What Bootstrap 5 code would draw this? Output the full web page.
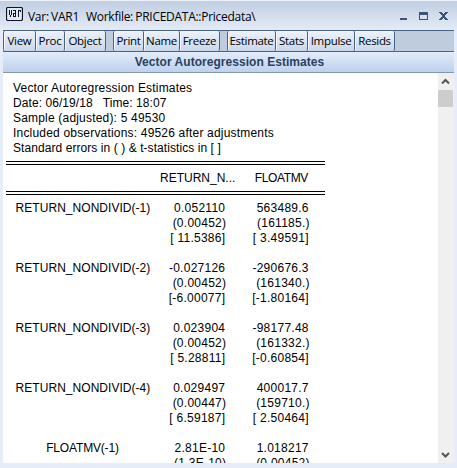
<!DOCTYPE html>
<html lang="en">
<head>
<meta charset="utf-8">
<title>Var: VAR1</title>
<link href="https://cdn.jsdelivr.net/npm/bootstrap@5.3.0/dist/css/bootstrap.min.css" rel="stylesheet">
<style>
body{width:457px;height:468px;background:#e6ecf8;font-family:"Liberation Sans",Arial,sans-serif;color:#000}
.win{height:468px;border-top:1px solid #eef2fa;background:#e6ecf8}
.titlebar{height:29px;padding:0 8px 0 6px;background:linear-gradient(#c0cee2,#e4ebf6);white-space:pre}
.app-icon{margin-bottom:3px}
.caption-text{font:12px/29px "Open Sans","Noto Sans",sans-serif;margin-left:5px;letter-spacing:-.28px;word-spacing:-.5px;padding-top:1px}
.inner{margin:0 3px;height:433px}
.tools{height:22px;background:#bfccde;border-top:1px solid #48628a;border-bottom:1px solid #48628a}
.tools .btn{--bs-btn-padding-x:0;--bs-btn-padding-y:0;border:0;border-right:1px solid #48628a;border-radius:2px;height:20px;background:linear-gradient(#edf2fa,#c9d7ea);color:#000;font:11.5px/20px "Open Sans","Noto Sans",sans-serif;letter-spacing:-.32px;white-space:nowrap;box-shadow:inset 1px 1px #f4f7fc}
.tools .first{border-left:1px solid #48628a}
.w29{width:29px}.w31{width:31px}.w32{width:32px}.w33{width:33px}.w36{width:36px}.w40{width:40px}.w41{width:41px}.w47{width:47px}.w49{width:49px}
.gap8{margin-right:7px}
.heading{height:21px;padding-left:2px;background:linear-gradient(#e3ecf8,#bbd2ee);border-bottom:1px solid #8596b3;color:#2b405f;font-size:12px;font-weight:700;line-height:20px;letter-spacing:.04px}
.sheet{height:390px;font-size:12px;line-height:15px;white-space:pre}
.content-pane{padding:8px 0 0 3px}
.intro{padding-left:7px;height:80px;letter-spacing:.19px}
.intro .tight{letter-spacing:.07px}
.rule{width:319px;height:4px;border-top:1px solid #000;border-bottom:1px solid #000}
.g{display:grid;grid-template-columns:154px 67px 83.5px;width:319px}
.heads{height:26px;padding-top:6px}
.rows{padding-top:6px}
.entry{height:60px}
.n{text-align:right;padding-right:1.75px;letter-spacing:.25px}
.heads .n{letter-spacing:-.35px;padding-right:2.5px}
.n .p{margin-right:-1px}
.lab{text-align:center;letter-spacing:.04px}
.lab-short{letter-spacing:-.17px;padding-right:1px}
.sb{width:16px;background:#f0f0f0}
.thumb{height:17px;width:15px;background:#cdcdcd}
</style>
<script src="https://cdn.jsdelivr.net/npm/bootstrap@5.3.0/dist/js/bootstrap.bundle.min.js"></script>
</head>
<body class="overflow-hidden">
<div class="win">
<header class="titlebar d-flex align-items-center">
<svg class="app-icon" width="17" height="14" viewBox="0 0 17 14" fill="none" stroke="#0c1626"><rect x=".5" y=".5" width="16" height="13" rx="1.5" fill="#dfe7f3" stroke-width="1.2"/><path d="M3.500 3v5M4.500 8v2M5.500 3v5M7 3.500h3M9.500 3v7M7 9.500h3M7.500 6v4M7 6.500h3M12.500 3v7M12 3.500h3M14.500 3v2" shape-rendering="crispEdges"/></svg>
<span class="caption-text">Var: VAR1   Workfile: PRICEDATA::Pricedata\</span>
<svg class="ms-auto" width="49" height="10" viewBox="0 0 49 10" fill="#3c5378" shape-rendering="crispEdges"><path d="M0 7h7v2H0zM19 1h9v8h-9zM39 1h3v1h-3zM45 1h3v1h-3zM40 2h3v1h-3zM44 2h3v1h-3zM41 3h5v1h-5zM42 4h3v2h-3zM41 6h5v1h-5zM40 7h3v1h-3zM44 7h3v1h-3zM39 8h3v1h-3zM45 8h3v1h-3z"/><path d="M20 4h7v4h-7z" fill="#d6e0ee"/></svg>
</header>
<div class="inner">
<nav class="tools d-flex">
<button class="btn first w33">View</button><button class="btn w29">Proc</button><button class="btn w41 gap8">Object</button>
<button class="btn first w31">Print</button><button class="btn w36">Name</button><button class="btn w40 gap8">Freeze</button>
<button class="btn first w49">Estimate</button><button class="btn w32">Stats</button><button class="btn w47">Impulse</button><button class="btn w40">Resids</button>
</nav>
<div class="heading text-center">Vector Autoregression Estimates</div>
<div class="sheet d-flex bg-white overflow-hidden"><main class="content-pane flex-grow-1"><div class="intro"><div>Vector Autoregression Estimates</div><div class="tight">Date: 06/19/18   Time: 18:07</div><div>Sample (adjusted): 5 49530</div><div>Included observations: 49526 after adjustments</div><div class="tight">Standard errors in ( ) &amp; t-statistics in [ ]</div></div><div class="rule"></div><div class="g heads"><div></div><div>RETURN_N...</div><div class="n">FLOATMV</div></div><div class="rule"></div><div class="rows"><div class="g entry"><div class="lab">RETURN_NONDIVID(-1)</div><div class="n"><div>0.052110</div><div class="p">(0.00452)</div><div>[ 11.5386]</div></div><div class="n"><div>563489.6</div><div class="p">(161185.)</div><div>[ 3.49591]</div></div></div><div class="g entry"><div class="lab">RETURN_NONDIVID(-2)</div><div class="n"><div>-0.027126</div><div class="p">(0.00452)</div><div>[-6.00077]</div></div><div class="n"><div>-290676.3</div><div class="p">(161340.)</div><div>[-1.80164]</div></div></div><div class="g entry"><div class="lab">RETURN_NONDIVID(-3)</div><div class="n"><div>0.023904</div><div class="p">(0.00452)</div><div>[ 5.28811]</div></div><div class="n"><div>-98177.48</div><div class="p">(161332.)</div><div>[-0.60854]</div></div></div><div class="g entry"><div class="lab">RETURN_NONDIVID(-4)</div><div class="n"><div>0.029497</div><div class="p">(0.00447)</div><div>[ 6.59187]</div></div><div class="n"><div>400017.7</div><div class="p">(159710.)</div><div>[ 2.50464]</div></div></div><div class="g entry"><div class="lab lab-short">FLOATMV(-1)</div><div class="n"><div>2.81E-10</div><div class="p">(1.3E-10)</div></div><div class="n"><div>1.018217</div><div class="p">(0.00452)</div></div></div></div></main><aside class="sb d-flex flex-column"><svg width="15" height="17" viewBox="0 0 15 17" fill="none" stroke="#555" stroke-width="2"><path d="M4 10.500L7.500 7L11 10.500"/></svg><div class="thumb"></div><svg class="mt-auto" width="15" height="17" viewBox="0 0 15 17" fill="none" stroke="#555" stroke-width="2"><path d="M4 7L7.500 10.500L11 7"/></svg></aside></div>
</div>
</div>
</body>
</html>
